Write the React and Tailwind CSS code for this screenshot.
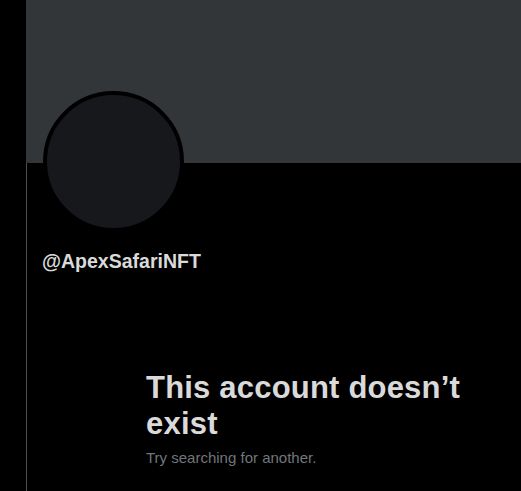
export default function App() {
  return (
    <div className="flex h-[491px] w-[521px] overflow-hidden bg-black" style={{ fontFamily: '"Liberation Sans", Arial, sans-serif' }}>
      <div className="w-[26px] shrink-0 bg-black" />
      <div className="flex flex-1 flex-col border-l border-[#4a4d50]">
        <div className="-ml-px h-[163px] bg-[#333639]" />
        <div className="-mt-[72px] ml-[16px] h-[141px] w-[141px] rounded-full border-4 border-black bg-[#16181c]" />
        <div className="ml-[15px] mt-[17px] text-[19.5px] font-bold leading-6 text-[#dadada]">@ApexSafariNFT</div>
        <div className="ml-[119px] mt-[97px] flex flex-col">
          <h1 className="text-[31px] font-bold leading-[36px] tracking-[0.2px] text-[#dadada]">This account doesn’t exist</h1>
          <p className="mt-[6px] text-[15px] leading-5 text-[#71767b]">Try searching for another.</p>
        </div>
      </div>
    </div>
  );
}
